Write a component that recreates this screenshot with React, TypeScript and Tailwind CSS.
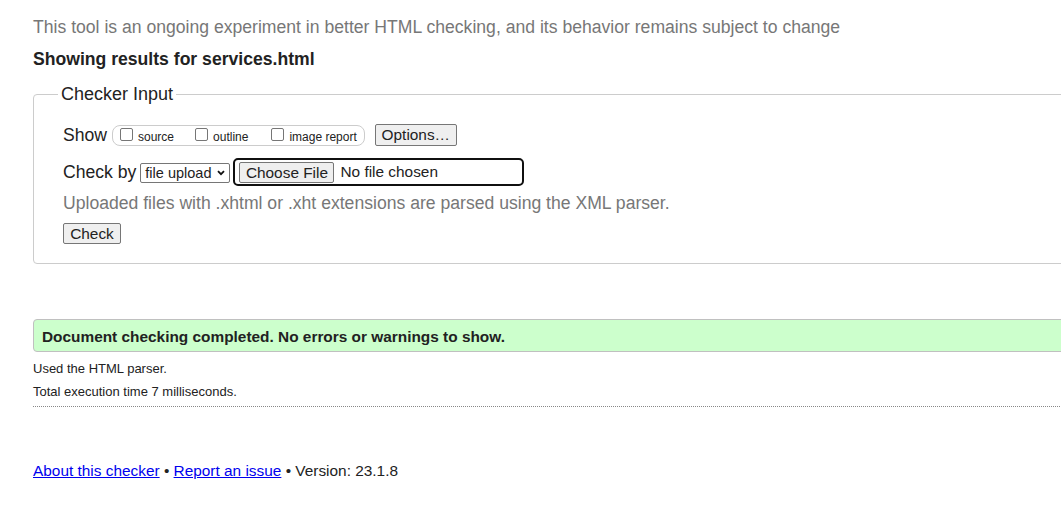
export default function App() {
  return (
    <div className="w-[1061px] h-[526px] overflow-hidden bg-white font-['Liberation_Sans',Arial,sans-serif] text-[#222]">
      <div className="w-[1100px] pl-[33px]">
        <p className="pt-[17px] text-[17.6px] leading-[21px] text-[#777]">
          This tool is an ongoing experiment in better HTML checking, and its behavior remains subject to change
        </p>
        <p className="mt-[11px] text-[17.6px] leading-[20px] font-bold">Showing results for services.html</p>

        {/* Checker input box */}
        <fieldset className="mt-[15px] border border-[#ccc] rounded-[4px] pl-[29px] pt-[18px] pb-[19px]">
          <legend className="-ml-[5px] px-[3px] text-[18px] leading-[21px]">Checker Input</legend>

          <div className="flex items-start">
            <span className="mt-[2px] text-[17.6px] leading-[20px]">Show</span>
            <div className="ml-[5px] mt-[2px] h-[21px] flex items-start border border-[#ccc] rounded-[8px] pl-[7px] pr-[7px]">
              {["source", "outline", "image report"].map((label, i) => (
                <label
                  key={label}
                  className={"flex items-start " + (i === 1 ? "ml-[21px]" : i === 2 ? "ml-[23px]" : "")}
                >
                  <span className="mt-[2px] w-[13px] h-[13px] border border-[#767676] rounded-[2px] bg-white" />
                  <span className="ml-[5px] mt-[4px] text-[12px] leading-[14px]">{label}</span>
                </label>
              ))}
            </div>
            <button className="ml-[10px] mt-[1px] w-[82px] h-[22px] flex items-center justify-center border border-[#767676] rounded-[2px] bg-[#efefef] text-[15.4px] leading-[18px]">
              Options…
            </button>
          </div>

          <div className="mt-[12px] flex items-start">
            <span className="mt-[4px] text-[17.6px] leading-[20px]">Check by</span>
            <div className="ml-[4px] mt-[5px] h-[20px] flex items-center border border-[#767676] rounded-[2px] bg-white pl-[4px] pr-[4px]">
              <span className="text-[14.5px] leading-[18px]">file upload</span>
              <svg className="ml-[6px]" width="8" height="6" viewBox="0 0 8 6">
                <path d="M1 1.2 L4 4.2 L7 1.2" fill="none" stroke="#111" strokeWidth="1.8" />
              </svg>
            </div>
            <div className="ml-[3px] w-[291px] h-[28px] border-2 border-[#101010] rounded-[5px] flex items-start pl-[4px]">
              <button className="mt-[2px] w-[95px] h-[21px] flex items-center justify-center border border-[#767676] rounded-[2px] bg-[#efefef] text-[15.4px] leading-[18px]">
                Choose File
              </button>
              <span className="ml-[6px] mt-[3px] text-[15.4px] leading-[18px]">No file chosen</span>
            </div>
          </div>

          <p className="mt-[7px] text-[17.6px] leading-[20px] text-[#777]">
            Uploaded files with .xhtml or .xht extensions are parsed using the XML parser.
          </p>

          <button className="mt-[10px] w-[58px] h-[21px] flex items-center justify-center border border-[#767676] rounded-[2px] bg-[#efefef] text-[15.4px] leading-[18px]">
            Check
          </button>
        </fieldset>

        {/* Result */}
        <div className="mt-[55px] h-[33px] pt-[8px] pl-[8px] border border-[#c0c0c0] rounded-l-[4px] bg-[#ccffcc] text-[15.4px] leading-[18px] font-bold">
          Document checking completed. No errors or warnings to show.
        </div>
        <p className="mt-[9px] text-[13px] leading-[16px]">Used the HTML parser.</p>
        <p className="mt-[7px] text-[13px] leading-[16px]">Total execution time 7 milliseconds.</p>
        <div className="mt-[6px] border-t border-dotted border-[#888]" />

        <p className="mt-[55px] text-[15.4px] leading-[18px]">
          <a href="#" className="text-[#0000ee] underline">About this checker</a> •{" "}
          <a href="#" className="text-[#0000ee] underline">Report an issue</a> • Version: 23.1.8
        </p>
      </div>
    </div>
  );
}
